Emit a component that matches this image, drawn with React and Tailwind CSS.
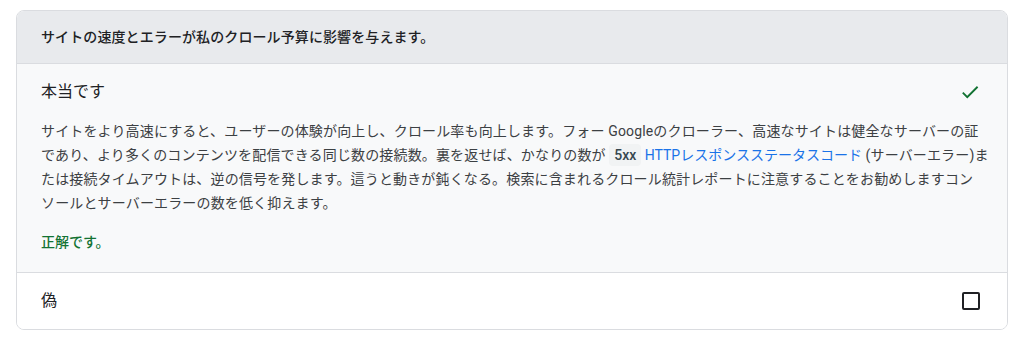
export default function App() {
  const font = { fontFamily: 'Roboto, "Noto Sans CJK JP", sans-serif' };
  return (
    <div className="bg-white w-[1018px] h-[340px] pt-[10px] px-4" style={font}>
      <div className="w-[992px] rounded-lg border border-[#dadce0] overflow-hidden">
        <div className="bg-[#e8eaed] px-6 py-4 text-sm leading-5 font-medium tracking-[0.1px] text-[#202124] border-b border-[#dadce0]">
          サイトの速度とエラーが私のクロール予算に影響を与えます。
        </div>
        <div className="bg-[#f8f9fa] pl-6 pr-6 pt-4 pb-[18px] border-b border-[#dadce0]">
          <div className="flex items-center justify-between">
            <span className="text-base leading-6 text-[#202124]">本当です</span>
            <svg width="22" height="22" viewBox="0 0 24 24" className="mr-[2px]">
              <path d="M9 16.17L4.83 12l-1.42 1.41L9 19 21 7l-1.41-1.41z" fill="#137333" />
            </svg>
          </div>
          <p className="mt-[15px] mr-[-16px] text-sm leading-6 tracking-[0.15px] text-[#3c4043]">
            サイトをより高速にすると、ユーザーの体験が向上し、クロール率も向上します。フォー Googleのクローラー、高速なサイトは健全なサーバーの証<br />
            であり、より多くのコンテンツを配信できる同じ数の接続数。裏を返せば、かなりの数が<span className="tracking-normal"> </span>
            <code className="bg-[#f1f3f4] text-[#37474f] font-medium px-[5px] py-[3px] rounded text-sm tracking-normal" style={font}>5xx</code>
            <span className="tracking-normal"> </span>
            <a className="text-[#1a73e8] tracking-normal">HTTPレスポンスステータスコード</a> (サーバーエラー)ま<br />
            たは接続タイムアウトは、逆の信号を発します。這うと動きが鈍くなる。検索に含まれるクロール統計レポートに注意することをお勧めしますコン<br />
            ソールとサーバーエラーの数を低く抑えます。
          </p>
          <p className="mt-[15px] text-sm leading-6 font-medium text-[#137333]">正解です。</p>
        </div>
        <div className="bg-white px-6 py-4 flex items-center justify-between">
          <span className="text-base leading-6 text-[#202124]">偽</span>
          <div className="w-[18px] h-[18px] border-2 border-[#202124] rounded-[2px] mr-[3px]"></div>
        </div>
      </div>
    </div>
  );
}
